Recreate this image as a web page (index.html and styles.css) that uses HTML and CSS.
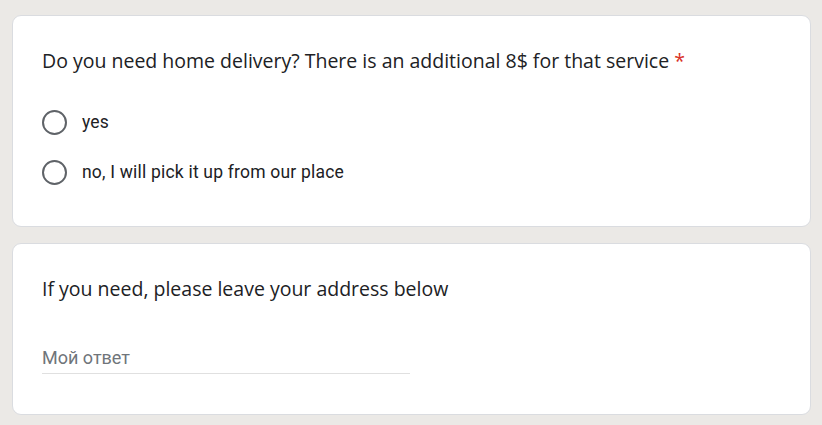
FILE: index.html
```html
<!DOCTYPE html>
<html>
<head>
<meta charset="utf-8">
<link rel="stylesheet" href="styles.css">
</head>
<body>
<main class="form">
  <section class="card">
    <div class="title">Do you need home delivery? There is an additional 8$ for that service <span class="req">*</span></div>
    <div class="options">
      <label class="option"><span class="radio"></span><span class="opt-text">yes</span></label>
      <label class="option"><span class="radio"></span><span class="opt-text">no, I will pick it up from our place</span></label>
    </div>
  </section>
  <section class="card card-text">
    <div class="title">If you need, please leave your address below</div>
    <div class="input"><span class="placeholder">Мой ответ</span></div>
  </section>
</main>
</body>
</html>
```
FILE: styles.css
```css
html, body {
  margin: 0;
  padding: 0;
  background: #ebe9e6;
}
body {
  font-family: Roboto, "Liberation Sans", sans-serif;
  color: #202124;
}
.form {
  display: flex;
  flex-direction: column;
  gap: 16px;
  padding: 15px 0 0 12px;
  width: 799px;
}
.card {
  box-sizing: border-box;
  background: #fff;
  border: 1px solid #dadce0;
  border-radius: 9px;
  padding: 32px 29px 29px;
}
.title {
  font-family: "Open Sans", sans-serif;
  font-size: 19.5px;
  line-height: 26px;
  color: #202124;
}
.req {
  color: #d93025;
}
.options {
  display: flex;
  flex-direction: column;
  margin-top: 23px;
}
.option {
  display: flex;
  align-items: center;
  height: 50px;
}
.radio {
  box-sizing: border-box;
  width: 25px;
  height: 25px;
  border: 2.5px solid #5f6368;
  border-radius: 50%;
}
.opt-text {
  margin-left: 15px;
  font-size: 17.5px;
  letter-spacing: 0.2px;
  color: #202124;
}
.card-text {
  padding-bottom: 40px;
}
.input {
  margin-top: 42px;
  width: 368px;
  height: 29px;
  padding-bottom: 0;
  border-bottom: 1px solid #e0e0e0;
  display: flex;
  align-items: center;
}
.placeholder {
  font-size: 18px;
  color: #70757a;
  margin-bottom: 2px;
}
```
